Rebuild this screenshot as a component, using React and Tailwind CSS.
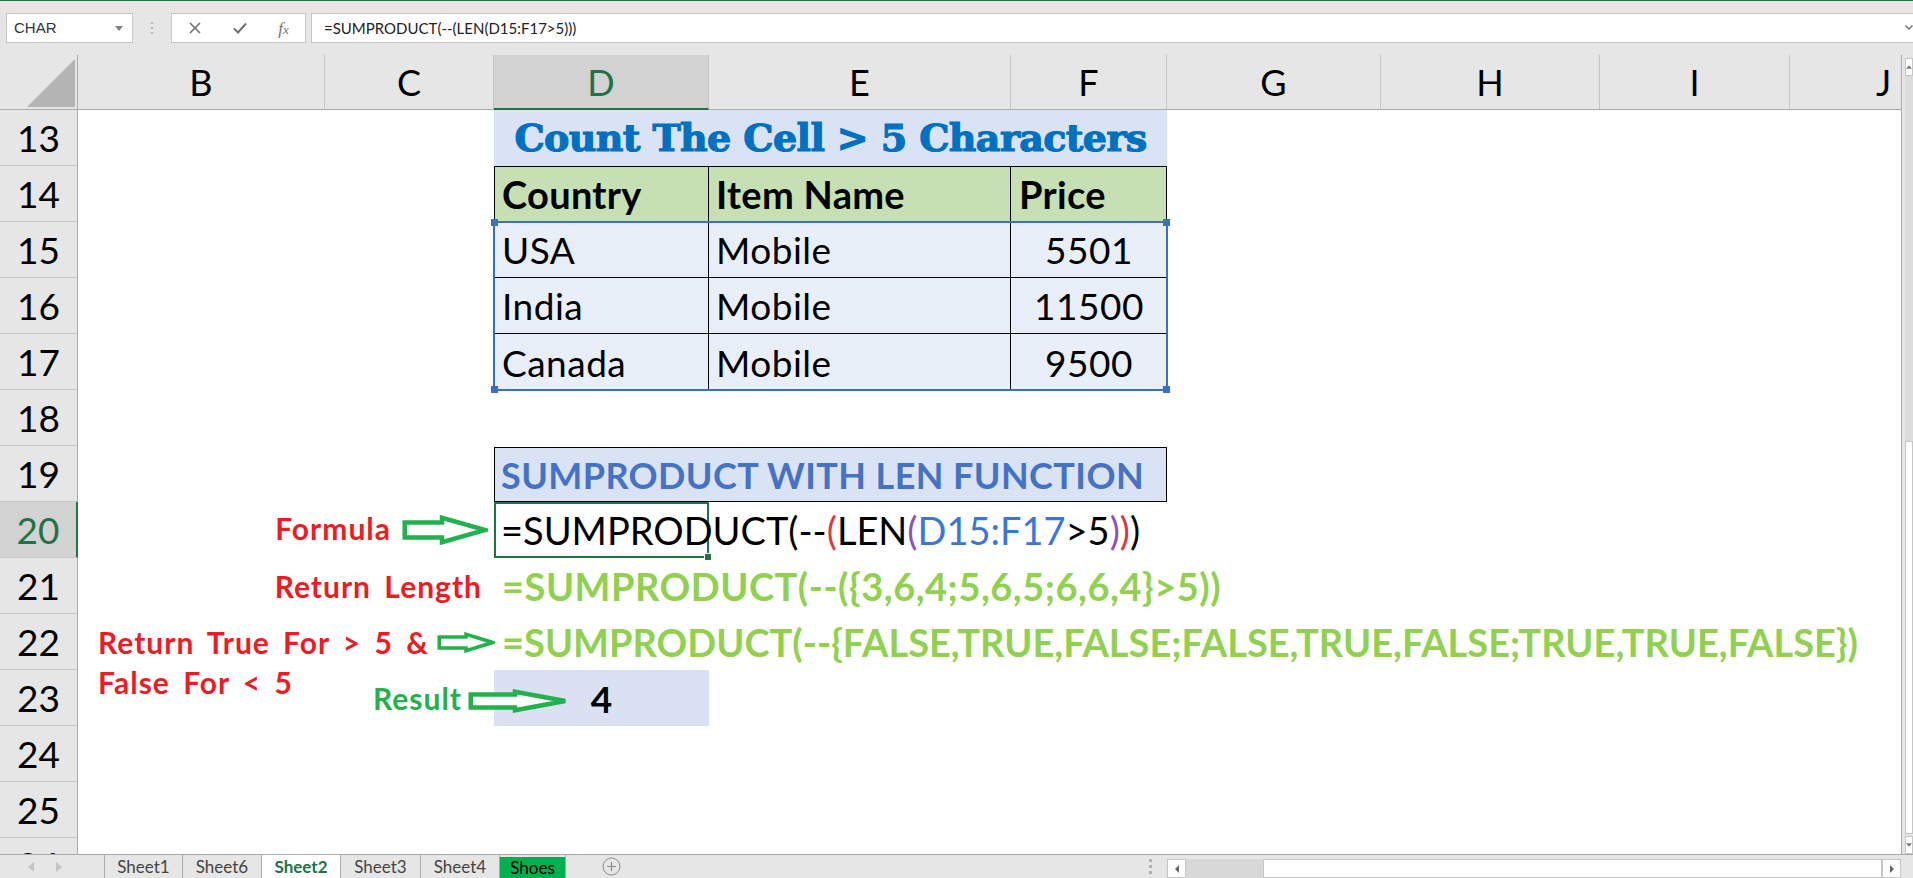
import React from "react";

function Arrow({ w, h, shaft, headX, sw = 3.5, className = "" }) {
  const p = sw / 2 + 0.5;
  const cy = h / 2;
  const pts = [
    [p, cy - shaft / 2],
    [headX, cy - shaft / 2],
    [headX, p],
    [w - p, cy],
    [headX, h - p],
    [headX, cy + shaft / 2],
    [p, cy + shaft / 2],
  ]
    .map((a) => a.join(","))
    .join(" ");
  return (
    <svg width={w} height={h} viewBox={`0 0 ${w} ${h}`} className={className}>
      <polygon points={pts} fill="white" stroke="#22b14c" strokeWidth={sw} strokeLinejoin="miter" />
    </svg>
  );
}

function Toolbar() {
  return (
    <div className="h-[55px] shrink-0 border-t border-t-[#217346] flex items-start pt-[12px] bg-[#e6e6e6]">
      <div className="ml-[6px] w-[127px] h-[30px] bg-white border border-[#c6c6c6] flex items-center justify-between pl-[7px] pr-[9px]">
        <span className="text-[15px] text-[#333] font-['Liberation_Sans',sans-serif]">CHAR</span>
        <svg width="8" height="5" viewBox="0 0 8 5">
          <polygon points="0,0 8,0 4,5" fill="#808080" />
        </svg>
      </div>
      <div className="w-[38px] h-[30px] flex flex-col items-center justify-center gap-[3px]">
        <div className="w-[2px] h-[2px] bg-[#b4b4b4]" />
        <div className="w-[2px] h-[2px] bg-[#b4b4b4]" />
        <div className="w-[2px] h-[2px] bg-[#b4b4b4]" />
      </div>
      <div className="w-[135px] h-[30px] bg-white border border-[#c6c6c6] flex items-center">
        <div className="w-[45px] flex justify-center">
          <svg width="14" height="14" viewBox="0 0 14 14">
            <path d="M2 2 L12 12 M12 2 L2 12" stroke="#6f6f6f" strokeWidth="1.6" />
          </svg>
        </div>
        <div className="w-[45px] flex justify-center">
          <svg width="16" height="14" viewBox="0 0 16 14">
            <path d="M2 7.5 L6 11.5 L14 2.5" stroke="#6f6f6f" strokeWidth="2" fill="none" />
          </svg>
        </div>
        <div className="w-[43px] flex justify-center">
          <span className="font-['Liberation_Serif',serif] italic text-[17px] text-[#707070] leading-none">
            f<span className="text-[13px]">x</span>
          </span>
        </div>
      </div>
      <div className="ml-[5px] flex-1 h-[30px] bg-white border border-[#c6c6c6] border-r-0 flex items-center pl-[12px] relative">
        <span className="text-[15px] text-[#222] font-['Lato',sans-serif]">=SUMPRODUCT(--(LEN(D15:F17&gt;5)))</span>
        <svg width="8" height="5" viewBox="0 0 8 5" className="absolute right-[0px] top-[11px]">
          <path d="M0.5 0.5 L4 4 L7.5 0.5" stroke="#777" strokeWidth="1.5" fill="none" />
        </svg>
      </div>
    </div>
  );
}

const colHdr =
  "flex items-center justify-center bg-[#e6e6e6] border-r border-r-[#c6c6c6] border-b border-b-[#ababab] text-[36px] leading-none text-black";
const colHdrSel =
  "flex items-center justify-center bg-[#d2d2d2] border-r border-r-[#c6c6c6] border-b-2 border-b-[#217346] text-[36px] leading-none text-[#217346]";
const rowHdr =
  "flex items-center justify-center bg-[#e6e6e6] border-r border-r-[#ababab] border-b border-b-[#c6c6c6] text-[37px] leading-none text-black";
const rowHdrSel =
  "flex items-center justify-center bg-[#d2d2d2] border-r-2 border-r-[#217346] border-b border-b-[#c6c6c6] text-[37px] leading-none text-[#217346]";

const note =
  "font-bold text-[30px] leading-none tracking-[1px] [word-spacing:5px] text-[#ed1c24] whitespace-nowrap shrink-0";
const greenF =
  "flex items-center pl-[8px] whitespace-nowrap min-w-0 font-bold text-[38px] leading-none text-[#92d050]";
const dataCell = "bg-[#e9eff9] flex items-center whitespace-nowrap text-[37px] tracking-[0.5px] leading-none";
const hdrCell =
  "bg-[#c6e0b4] flex items-center font-bold text-[38px] tracking-[0.3px] leading-none whitespace-nowrap";

function Grid() {
  return (
    <div className="w-[1901px] h-[799px] shrink-0 grid grid-cols-[78px_247px_169px_215px_302px_156px_214px_219px_190px_188px] grid-rows-[55px_repeat(13,56px)_16px] bg-white overflow-hidden">
      {/* header row */}
      <div className="relative bg-[#e6e6e6] border-r border-r-[#ababab] border-b border-b-[#ababab]">
        <svg width="78" height="55" viewBox="0 0 78 55" className="absolute left-0 top-0">
          <polygon points="27,52 75,4 75,52" fill="#b4b4b4" />
        </svg>
      </div>
      <div className={colHdr}>B</div>
      <div className={colHdr}>C</div>
      <div className={colHdrSel}>D</div>
      <div className={colHdr}>E</div>
      <div className={colHdr}>F</div>
      <div className={colHdr}>G</div>
      <div className={colHdr}>H</div>
      <div className={colHdr}>I</div>
      <div className={colHdr}>J</div>

      {/* 13 */}
      <div className={rowHdr}>13</div>
      <div />
      <div />
      <div className="col-span-3 bg-[#dae3f3] flex items-center justify-center whitespace-nowrap font-['DejaVu_Serif',serif] font-bold text-[38px] leading-none tracking-[-0.6px] [-webkit-text-stroke:1.2px_#0070c0] text-[#0070c0]">
        Count The Cell &gt; 5 Characters
      </div>
      <div className="col-span-4" />

      {/* 14 */}
      <div className={rowHdr}>14</div>
      <div />
      <div />
      <div className={`${hdrCell} border border-black pl-[7px]`}>Country</div>
      <div className={`${hdrCell} border-t border-b border-r border-black pl-[7px]`}>Item Name</div>
      <div className={`${hdrCell} border-t border-b border-r border-black pl-[8px]`}>Price</div>
      <div className="col-span-4" />

      {/* 15 */}
      <div className={rowHdr}>15</div>
      <div />
      <div />
      <div className={`${dataCell} relative pl-[8px] border-r border-b border-black`}>
        USA
        <div className="absolute left-[-1px] top-[-1px] w-[675px] h-[170px] border-2 border-[#3b6fc6] z-10 pointer-events-none">
          <div className="absolute left-[-4px] top-[-4px] w-[7px] h-[7px] bg-[#3b6fc6]" />
          <div className="absolute right-[-4px] top-[-4px] w-[7px] h-[7px] bg-[#3b6fc6]" />
          <div className="absolute left-[-4px] bottom-[-4px] w-[7px] h-[7px] bg-[#3b6fc6]" />
          <div className="absolute right-[-4px] bottom-[-4px] w-[7px] h-[7px] bg-[#3b6fc6]" />
        </div>
      </div>
      <div className={`${dataCell} pl-[7px] border-r border-b border-black`}>Mobile</div>
      <div className={`${dataCell} justify-center border-b border-black`}>5501</div>
      <div className="col-span-4" />

      {/* 16 */}
      <div className={rowHdr}>16</div>
      <div />
      <div />
      <div className={`${dataCell} pl-[8px] border-r border-b border-black`}>India</div>
      <div className={`${dataCell} pl-[7px] border-r border-b border-black`}>Mobile</div>
      <div className={`${dataCell} justify-center border-b border-black`}>11500</div>
      <div className="col-span-4" />

      {/* 17 */}
      <div className={rowHdr}>17</div>
      <div />
      <div />
      <div className={`${dataCell} pl-[8px] border-r border-black`}>Canada</div>
      <div className={`${dataCell} pl-[7px] border-r border-black`}>Mobile</div>
      <div className={`${dataCell} justify-center`}>9500</div>
      <div className="col-span-4" />

      {/* 18 */}
      <div className={rowHdr}>18</div>
      <div className="col-span-9" />

      {/* 19 */}
      <div className={rowHdr}>19</div>
      <div className="col-span-2" />
      <div className="col-span-3 mt-[1px] bg-[#dae3f3] border border-black flex items-center pl-[6px] whitespace-nowrap font-bold text-[36px] tracking-[0.4px] leading-none text-[#4472c4]">
        SUMPRODUCT WITH LEN FUNCTION
      </div>
      <div className="col-span-4" />

      {/* 20 */}
      <div className={rowHdrSel}>20</div>
      <div className="col-span-2 flex items-center justify-end pr-[6px] gap-[11px]">
        <span className={`${note} -mt-[5px]`}>Formula</span>
        <Arrow w={86} h={30} shaft={15} headX={40} sw={4.5} className="shrink-0" />
      </div>
      <div className="relative border-2 border-[#217346] flex items-center pl-[5px] whitespace-nowrap min-w-0 text-[38px] leading-none text-black">
        <span>=SUMPRODUCT(--</span>
        <span className="text-[#d63a47]">(</span>
        <span>LEN</span>
        <span className="text-[#8b52b8]">(</span>
        <span className="text-[#3a78d4]">D15:F17</span>
        <span>&gt;5</span>
        <span className="text-[#8b52b8]">)</span>
        <span className="text-[#d63a47]">)</span>
        <span>)</span>
        <div className="absolute right-[-5px] bottom-[-5px] w-[8px] h-[8px] bg-[#217346] border border-white z-10" />
      </div>
      <div className="col-span-6" />

      {/* 21 */}
      <div className={rowHdr}>21</div>
      <div className="col-span-2 flex items-center justify-end pr-[12px]">
        <span className={note}>Return Length</span>
      </div>
      <div className={`${greenF} tracking-[0.5px]`}>=SUMPRODUCT(--({"{"}3,6,4;5,6,5;6,6,4{"}"}&gt;5))</div>
      <div className="col-span-6" />

      {/* 22 */}
      <div className={rowHdr}>22</div>
      <div className="col-span-2 flex items-center pl-[20px]">
        <span className={note}>Return True For &gt; 5 &amp;</span>
        <Arrow w={58} h={21} shaft={11} headX={29} sw={3.5} className="shrink-0 ml-[8px] relative z-10" />
      </div>
      <div className={greenF}>
        =SUMPRODUCT(--{"{"}FALSE,TRUE,FALSE;FALSE,TRUE,FALSE;TRUE,TRUE,FALSE{"}"})
      </div>
      <div className="col-span-6" />

      {/* 23 */}
      <div className={rowHdr}>23</div>
      <div className="col-span-2 flex items-start pl-[20px]">
        <div className="w-[275px] shrink-0">
          <span className={`${note} block mt-[-3px]`}>False For &lt; 5</span>
        </div>
        <span className="font-bold text-[30px] leading-none tracking-[1px] text-[#22b14c] whitespace-nowrap shrink-0 self-center">
          Result
        </span>
        <Arrow w={100} h={24} shaft={13} headX={47} sw={4.5} className="shrink-0 ml-[6px] self-center mt-[6px] relative z-10" />
      </div>
      <div className="bg-[#d9e1f2] flex items-center justify-center font-bold text-[37px] leading-none">4</div>
      <div className="col-span-6" />

      {/* 24 */}
      <div className={rowHdr}>24</div>
      <div className="col-span-9" />

      {/* 25 */}
      <div className={rowHdr}>25</div>
      <div className="col-span-9" />

      {/* 26 */}
      <div className="flex items-start justify-center overflow-hidden bg-[#e6e6e6] border-r border-r-[#ababab] text-[37px] leading-none pt-[8px]">
        26
      </div>
      <div className="col-span-9" />
    </div>
  );
}

function VScroll() {
  return (
    <div className="w-[12px] h-[799px] shrink-0 bg-[#e6e6e6] border-l border-[#ababab] pl-[3px] flex flex-col overflow-hidden">
      <div className="mt-[3px] h-[18px] shrink-0 bg-white border border-[#c6c6c6] flex items-center justify-center">
        <svg width="7" height="4" viewBox="0 0 7 4">
          <polygon points="0,4 3.5,0 7,4" fill="#777" />
        </svg>
      </div>
      <div className="h-[365px] shrink-0 bg-[#dcdcdc]" />
      <div className="h-[393px] shrink-0 bg-white border border-[#c6c6c6]" />
      <div className="mt-[2px] h-[18px] shrink-0 bg-white border border-[#c6c6c6] flex items-center justify-center">
        <svg width="7" height="4" viewBox="0 0 7 4">
          <polygon points="0,0 7,0 3.5,4" fill="#777" />
        </svg>
      </div>
    </div>
  );
}

function SheetBar() {
  const tab = "h-full flex items-center justify-center border-l border-[#ababab] text-[17px] text-[#444] font-['Lato',sans-serif]";
  return (
    <div className="h-[24px] shrink-0 bg-[#e6e6e6] border-t border-[#ababab] flex">
      <div className="w-[104px] h-full flex items-center">
        <svg width="6" height="10" viewBox="0 0 6 10" className="ml-[28px]">
          <polygon points="6,0 0,5 6,10" fill="#c4c4c4" />
        </svg>
        <svg width="6" height="10" viewBox="0 0 6 10" className="ml-[22px]">
          <polygon points="0,0 6,5 0,10" fill="#c4c4c4" />
        </svg>
      </div>
      <div className={`w-[78px] ${tab}`}>Sheet1</div>
      <div className={`w-[79px] ${tab}`}>Sheet6</div>
      <div className="w-[79px] h-full flex items-center justify-center border-l border-[#ababab] bg-white text-[17px] font-bold text-[#217346]">
        Sheet2
      </div>
      <div className={`w-[80px] ${tab}`}>Sheet3</div>
      <div className={`w-[79px] ${tab}`}>Sheet4</div>
      <div className="w-[66px] h-full border-l border-[#ababab] pt-[2px]">
        <div className="h-full bg-[#00b050] flex items-center justify-center text-[17px] text-black">Shoes</div>
      </div>
      <div className="w-[92px] h-full border-l border-[#ababab] flex items-center justify-center">
        <svg width="19" height="19" viewBox="0 0 19 19">
          <circle cx="9.5" cy="9.5" r="8.5" fill="none" stroke="#8a8a8a" strokeWidth="1" />
          <path d="M9.5 5 V14 M5 9.5 H14" stroke="#8a8a8a" strokeWidth="1.2" />
        </svg>
      </div>
      <div className="flex-1" />
      <div className="w-[8px] h-full flex flex-col items-center justify-center gap-[3px]">
        <div className="w-[3px] h-[3px] bg-[#b0b0b0]" />
        <div className="w-[3px] h-[3px] bg-[#b0b0b0]" />
        <div className="w-[3px] h-[3px] bg-[#b0b0b0]" />
      </div>
      <div className="w-[13px]" />
      <div className="w-[19px] h-[19px] mt-[4px] bg-white border border-[#c6c6c6] flex items-center justify-center">
        <svg width="4" height="8" viewBox="0 0 4 8">
          <polygon points="4,0 0,4 4,8" fill="#666" />
        </svg>
      </div>
      <div className="w-[77px] h-[19px] mt-[4px] bg-[#d8d8d8]" />
      <div className="w-[619px] h-[19px] mt-[4px] bg-white border border-[#c6c6c6]" />
      <div className="w-[19px] h-[19px] mt-[4px] bg-white border border-[#c6c6c6] flex items-center justify-center">
        <svg width="4" height="8" viewBox="0 0 4 8">
          <polygon points="0,0 4,4 0,8" fill="#666" />
        </svg>
      </div>
      <div className="w-[12px]" />
    </div>
  );
}

export default function App() {
  return (
    <div className="w-[1913px] h-[878px] overflow-hidden bg-[#e6e6e6] flex flex-col font-['Lato',sans-serif] text-black">
      <Toolbar />
      <div className="flex h-[799px] shrink-0">
        <Grid />
        <VScroll />
      </div>
      <SheetBar />
    </div>
  );
}
